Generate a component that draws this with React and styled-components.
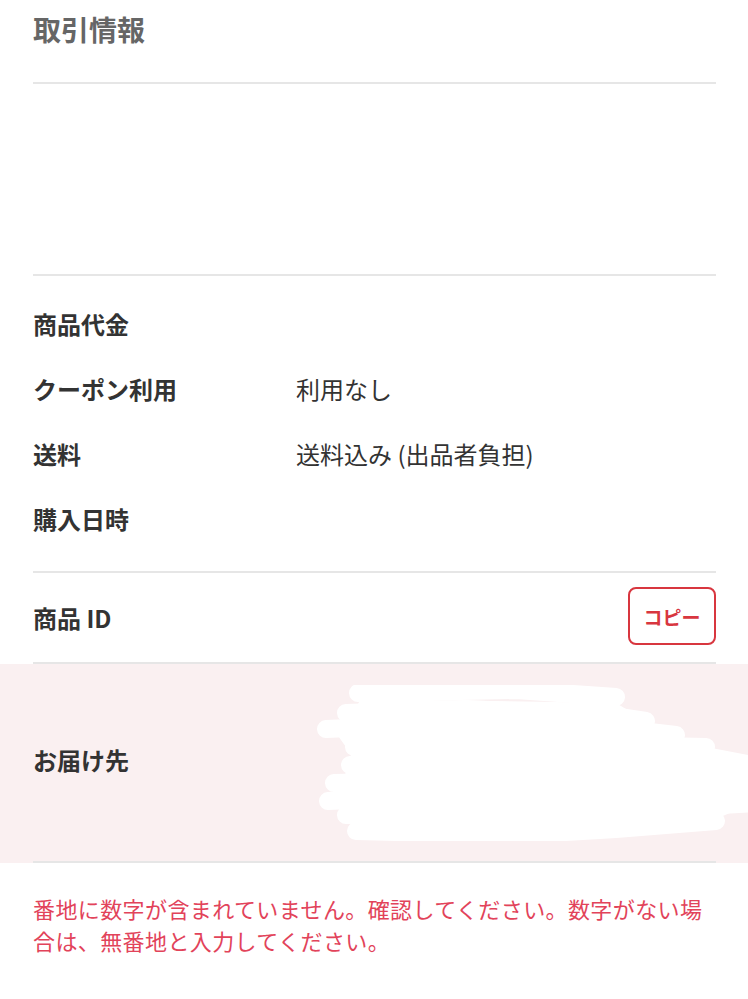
import React from "react";
import styled, { createGlobalStyle } from "styled-components";

const Global = createGlobalStyle`
  html, body { margin: 0; padding: 0; background: #fff; }
  body {
    font-family: "Noto Sans CJK JP", "Noto Sans", sans-serif;
    color: #333;
    -webkit-font-smoothing: antialiased;
  }
`;

const Page = styled.div`
  width: 748px;
  overflow: hidden;
`;

const Section = styled.section`
  background: ${(p) => (p.$tint ? "#faf0f1" : "transparent")};
  padding: 0 32px 0 33px;
`;

const Inner = styled.div`
  border-bottom: ${(p) => (p.$noBorder ? "none" : "2px solid #e6e6e6")};
  height: ${(p) => (p.$h ? `${p.$h}px` : "auto")};
  box-sizing: border-box;
  padding: ${(p) => p.$pad || "0"};
  display: flex;
  flex-direction: ${(p) => (p.$col ? "column" : "row")};
  align-items: ${(p) => (p.$col ? "stretch" : "center")};
`;

const Title = styled.h2`
  margin: 0;
  font-size: 28px;
  line-height: 40px;
  font-weight: 700;
  color: #666;
  align-self: flex-start;
  margin-top: 9px;
`;

const Row = styled.div`
  display: flex;
  align-items: center;
  height: ${(p) => p.$h || 65}px;
  width: 100%;
`;

const Label = styled.div`
  width: 263px;
  flex-shrink: 0;
  font-size: 24px;
  font-weight: 700;
  color: #333;
  line-height: 32px;
  margin-top: ${(p) => p.$nudge || 0}px;
`;

const Value = styled.div`
  flex: 1;
  font-size: 24px;
  font-weight: 400;
  color: #333;
  line-height: 32px;
  display: flex;
  align-items: center;
`;

const CopyButton = styled.button`
  margin-left: auto;
  margin-bottom: 3px;
  width: 88px;
  height: 58px;
  border: 2px solid #d8363f;
  border-radius: 8px;
  background: #fff;
  color: #d8363f;
  font-family: inherit;
  font-size: 19px;
  font-weight: 700;
  padding: 0;
  cursor: pointer;
`;

const Scribble = styled.svg`
  display: block;
  margin-left: 20px;
  margin-right: -32px;
  flex-shrink: 0;
`;

const Notice = styled.p`
  margin: 0;
  padding: 29px 0 0;
  font-size: 22px;
  line-height: 32px;
  color: #e2435a;
  letter-spacing: 0.4px;
`;

function Redaction() {
  const lines = [
    "M42 8 L200 5 L300 12",
    "M30 28 L150 24 L290 30 L330 36",
    "M10 44 L150 38 L290 42 L360 50",
    "M38 62 L200 58 L390 62",
    "M34 80 L250 76 L420 80 L432 80",
    "M18 98 L200 94 L440 92",
    "M12 116 L150 110 L440 104",
    "M30 130 L300 126 L440 118",
    "M40 146 L200 150 L300 144 L400 136",
  ];
  return (
    <Scribble width="432" height="156" viewBox="0 0 432 156">
      <polygon
        points="45,14 300,18 340,42 380,60 432,70 432,120 400,134 300,142 200,146 60,142 30,128 18,110 20,96 40,80 30,62 20,48 35,30"
        fill="#fff"
      />
      {lines.map((d, i) => (
        <path
          key={i}
          d={d}
          stroke="#fff"
          strokeWidth="18"
          strokeLinecap="round"
          strokeLinejoin="round"
          fill="none"
        />
      ))}
    </Scribble>
  );
}

export default function App() {
  return (
    <Page>
      <Global />
      <Section>
        <Inner $h={84}>
          <Title>取引情報</Title>
        </Inner>
      </Section>
      <Section>
        <Inner $h={192} />
      </Section>
      <Section>
        <Inner $col $pad="15px 0 20px">
          <Row>
            <Label>商品代金</Label>
            <Value />
          </Row>
          <Row>
            <Label>クーポン利用</Label>
            <Value>利用なし</Value>
          </Row>
          <Row>
            <Label>送料</Label>
            <Value>送料込み (出品者負担)</Value>
          </Row>
          <Row>
            <Label>購入日時</Label>
            <Value />
          </Row>
        </Inner>
      </Section>
      <Section>
        <Inner $h={91}>
          <Row $h={89}>
            <Label>商品 ID</Label>
            <CopyButton>コピー</CopyButton>
          </Row>
        </Inner>
      </Section>
      <Section $tint>
        <Inner $h={199}>
          <Row $h={197}>
            <Label $nudge={-6}>お届け先</Label>
            <Value>
              <Redaction />
            </Value>
          </Row>
        </Inner>
      </Section>
      <Section>
        <Inner $col $noBorder>
          <Notice>
            番地に数字が含まれていません。確認してください。数字がない場合は、無番地と入力してください。
          </Notice>
        </Inner>
      </Section>
    </Page>
  );
}
